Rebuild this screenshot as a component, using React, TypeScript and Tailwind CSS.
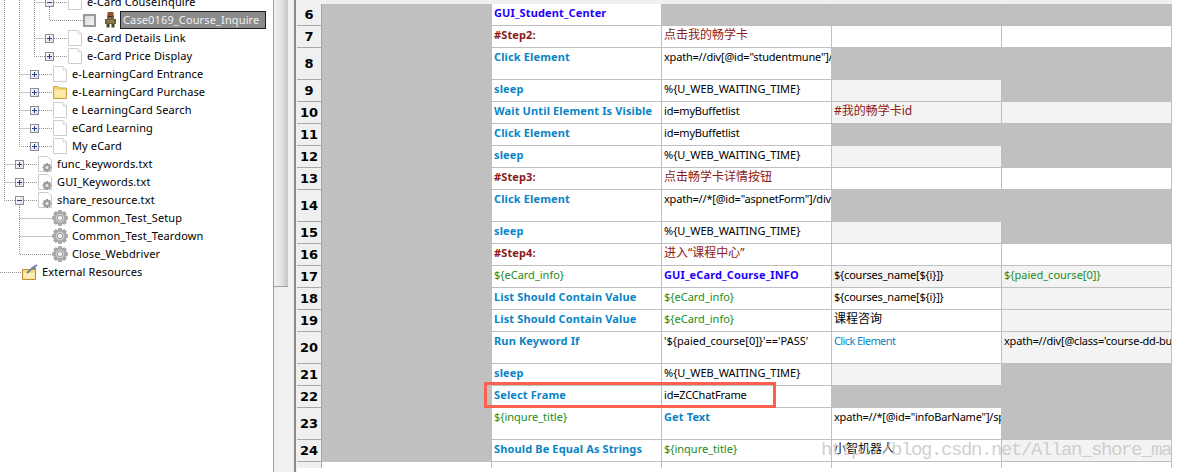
import React from "react";

const FONT = "font-['Noto_Sans','Noto_Sans_CJK_SC',sans-serif]";

function cogPath(cx: number, cy: number, r1: number, r2: number, n: number) {
  const pts: string[] = [];
  for (let i = 0; i < n; i++) {
    const a = (i / n) * Math.PI * 2;
    const w = Math.PI / n;
    const seq: [number, number][] = [
      [a - w * 0.95, r2],
      [a - w * 0.45, r1],
      [a + w * 0.45, r1],
      [a + w * 0.95, r2],
    ];
    seq.forEach(([t, r]) => pts.push(`${(cx + Math.cos(t) * r).toFixed(2)} ${(cy + Math.sin(t) * r).toFixed(2)}`));
  }
  return "M" + pts.join("L") + "Z";
}

function Cog({ size = 16 }: { size?: number }) {
  return (
    <svg width={size} height={size} viewBox="0 0 16 16" className="shrink-0">
      <path d={cogPath(8, 8, 7.8, 5.9, 8)} fill="#a9a9a9" stroke="#8f8f8f" strokeWidth="0.5" />
      <circle cx="8" cy="8" r="4.2" fill="#cfcfcf" />
      <circle cx="8" cy="8" r="2.6" fill="#f4f4f4" stroke="#8c8c8c" strokeWidth="0.8" />
    </svg>
  );
}

function Page() {
  return (
    <svg width="14" height="16" viewBox="0 0 14 16" className="shrink-0">
      <path d="M.5.5H10L13.5 4V15.5H.5Z" fill="#fff" stroke="#cdcdcd" />
      <path d="M10 .5V4H13.5" fill="#f2f2f2" stroke="#d8d8d8" />
    </svg>
  );
}

function Folder() {
  return (
    <svg width="14" height="16" viewBox="0 0 14 16" className="shrink-0">
      <path d="M.5 2.5H5L6 4H13.5V14.5H.5Z" fill="#f4d877" stroke="#c9a54a" />
      <path d="M1.5 6H12.5V13.5H1.5Z" fill="#fbeaa8" />
    </svg>
  );
}

function GearFile() {
  return (
    <svg width="14" height="16" viewBox="0 0 14 16" className="shrink-0">
      <path d="M.5.5H10L13.5 4V15.5H.5Z" fill="#fff" stroke="#cdcdcd" />
      <path d={cogPath(9, 11.5, 4.6, 3.3, 8)} fill="#9a9a9a" />
      <circle cx="9" cy="11.5" r="1.6" fill="#ececec" />
    </svg>
  );
}

function Robot() {
  return (
    <svg width="13" height="16" viewBox="0 0 13 16" className="shrink-0">
      <rect x="3.5" y="0" width="6" height="3" fill="#9c4a2a" />
      <rect x="3" y="3" width="7" height="4" fill="#7d6a3e" />
      <rect x="4" y="4" width="5" height="1" fill="#3c3420" />
      <rect x="1" y="7" width="11" height="5" fill="#6f5f38" />
      <rect x="3" y="8" width="7" height="3" fill="#8a7a4c" />
      <rect x="2.5" y="12" width="3" height="3.5" fill="#4e4428" />
      <rect x="7.5" y="12" width="3" height="3.5" fill="#4e4428" />
    </svg>
  );
}

function ExternalIcon() {
  return (
    <svg width="16" height="16" viewBox="0 0 16 16" className="shrink-0">
      <path d="M.5 5.5H13.5V15.5H.5Z" fill="#f6dc80" stroke="#bd8f3c" />
      <path d="M1.5 9H12.5V14.5H1.5Z" fill="#fbeeb8" />
      <path d="M5 9L11 3.5M11 3.5L15 1M11 3.5L14 5" stroke="#6d7f94" strokeWidth="1.8" fill="none" />
    </svg>
  );
}

function Toggle({ open }: { open?: boolean }) {
  return (
    <span className="relative mr-[14px] block h-[9px] w-[9px] shrink-0 border border-[#8c8c9c] bg-gradient-to-br from-white to-[#dcdce6]">
      <span className="absolute left-[1px] top-[3px] h-[1px] w-[5px] bg-[#2a3f8f]" />
      {!open && <span className="absolute left-[3px] top-[1px] h-[5px] w-[1px] bg-[#2a3f8f]" />}
    </span>
  );
}

const TREE_TEXT = "whitespace-nowrap text-[11px] leading-[16px] tracking-[0.13px]";

function Label({ children }: { children: React.ReactNode }) {
  return <span className={`${TREE_TEXT} pl-[5px] text-black`}>{children}</span>;
}

function TreeRow({ pad, open, icon, text }: { pad: string; open?: boolean; icon: React.ReactNode; text: string }) {
  return (
    <div className={`flex h-[18px] items-center ${pad}`}>
      <Toggle open={open} />
      {icon}
      <Label>{text}</Label>
    </div>
  );
}

function CogRow({ text }: { text: string }) {
  return (
    <div className="flex h-[18px] items-center pl-[52px]">
      <Cog />
      <span className={`${TREE_TEXT} pl-[4px] text-black`}>{text}</span>
    </div>
  );
}

function Tree() {
  const line = { stroke: "#8f8f8f", strokeWidth: 1, strokeDasharray: "1 1", fill: "none" };
  return (
    <div className={`relative h-full w-[273px] shrink-0 overflow-hidden bg-white ${FONT}`}>
      <svg width="273" height="472" className="absolute left-0 top-0">
        <path d="M4.5 0V200.5H15" {...line} />
        <path d="M19.5 0V146.5H30" {...line} />
        <path d="M34.5 0V56.5H45" {...line} />
        <path d="M34.5 2.5H45M34.5 38.5H45" {...line} />
        <path d="M49.5 7V20.5H83" {...line} />
        <path d="M19.5 74.5H30M19.5 92.5H30M19.5 110.5H30M19.5 128.5H30" {...line} />
        <path d="M4.5 164.5H15M4.5 182.5H15" {...line} />
        <path d="M54 2.5H68M54 38.5H68M54 56.5H68" {...line} />
        <path d="M39 74.5H53M39 92.5H53M39 110.5H53M39 128.5H53M39 146.5H53" {...line} />
        <path d="M24 164.5H38M24 182.5H38M24 200.5H38" {...line} />
        <path d="M19.5 205V254.5H52M19.5 218.5H52M19.5 236.5H52" {...line} />
        <path d="M0 272.5H22" {...line} />
      </svg>
      <div className="relative -mt-[7px]">
        <TreeRow pad="pl-[45px]" open icon={<Page />} text="e-Card CouseInquire" />
        <div className="flex h-[18px] items-center pl-[83px]">
          <span className="block h-[13px] w-[13px] shrink-0 border-2 border-[#9a9a9a] bg-gradient-to-br from-[#d8d8d8] to-[#f6f6f6]" />
          <span className="ml-[8px] mr-[3px] flex"><Robot /></span>
          <span className="flex h-[18px] w-[146px] items-center whitespace-nowrap border border-[#1c1c1c] bg-[#8c8c8c] pl-[2px] text-[11px] tracking-[0.13px] text-[#f0f0f0]">
            Case0169_Course_Inquire
          </span>
        </div>
        <TreeRow pad="pl-[45px]" icon={<Page />} text="e-Card Details Link" />
        <TreeRow pad="pl-[45px]" icon={<Page />} text="e-Card Price Display" />
        <TreeRow pad="pl-[30px]" icon={<Page />} text="e-LearningCard Entrance" />
        <TreeRow pad="pl-[30px]" icon={<Folder />} text="e-LearningCard Purchase" />
        <TreeRow pad="pl-[30px]" icon={<Page />} text="e LearningCard Search" />
        <TreeRow pad="pl-[30px]" icon={<Page />} text="eCard Learning" />
        <TreeRow pad="pl-[30px]" icon={<Page />} text="My eCard" />
        <TreeRow pad="pl-[15px]" icon={<GearFile />} text="func_keywords.txt" />
        <TreeRow pad="pl-[15px]" icon={<GearFile />} text="GUI_Keywords.txt" />
        <TreeRow pad="pl-[15px]" open icon={<GearFile />} text="share_resource.txt" />
        <CogRow text="Common_Test_Setup" />
        <CogRow text="Common_Test_Teardown" />
        <CogRow text="Close_Webdriver" />
        <div className="flex h-[18px] items-center pl-[22px]">
          <ExternalIcon />
          <span className={`${TREE_TEXT} pl-[4px] text-black`}>External Resources</span>
        </div>
      </div>
    </div>
  );
}

type Kind = "k" | "kn" | "b" | "m" | "c" | "v" | "p" | "s" | "z";
type Cell = { t?: string; k?: Kind; bg?: "g" | "l" };

const G: Cell = { bg: "g" };
const L: Cell = { bg: "l" };
const W: Cell = {};
const k = (t: string): Cell => ({ t, k: "k" });
const p = (t: string): Cell => ({ t, k: "p" });
const v = (t: string): Cell => ({ t, k: "v" });
const m = (t: string): Cell => ({ t, k: "m" });
const c = (t: string): Cell => ({ t, k: "c" });
const z = (t: string): Cell => ({ t, k: "z" });
const b = (t: string): Cell => ({ t, k: "b" });
const SL: Cell = { t: "%{U_WEB_WAITING_TIME}", k: "s" };
const CN = "${courses_name[${i}]}";

const rows: { n: number; tall?: boolean; cells: Cell[] }[] = [
  { n: 6, cells: [b("GUI_Student_Center"), G, G, G] },
  { n: 7, cells: [m("#Step2:"), c("点击我的畅学卡"), W, W] },
  { n: 8, tall: true, cells: [k("Click Element"), p('xpath=//div[@id="studentmune"]/'), G, G] },
  { n: 9, cells: [k("sleep"), SL, L, G] },
  { n: 10, cells: [k("Wait Until Element Is Visible"), p("id=myBuffetlist"), { t: "#我的畅学卡id", k: "c", bg: "l" }, L] },
  { n: 11, cells: [k("Click Element"), p("id=myBuffetlist"), G, G] },
  { n: 12, cells: [k("sleep"), SL, L, G] },
  { n: 13, cells: [m("#Step3:"), c("点击畅学卡详情按钮"), W, W] },
  { n: 14, tall: true, cells: [k("Click Element"), p('xpath=//*[@id="aspnetForm"]/div'), G, G] },
  { n: 15, cells: [k("sleep"), SL, L, G] },
  { n: 16, cells: [m("#Step4:"), c("进入“课程中心”"), W, W] },
  { n: 17, cells: [v("${eCard_info}"), b("GUI_eCard_Course_INFO"), { t: CN, k: "p", bg: "l" }, { t: "${paied_course[0]}", k: "v", bg: "l" }] },
  { n: 18, cells: [k("List Should Contain Value"), v("${eCard_info}"), p(CN), L] },
  { n: 19, cells: [k("List Should Contain Value"), v("${eCard_info}"), z("课程咨询"), L] },
  { n: 20, tall: true, cells: [k("Run Keyword If"), { t: "'${paied_course[0]}'=='PASS'", k: "s" }, { t: "Click Element", k: "kn" }, { t: "xpath=//div[@class='course-dd-bu", k: "p", bg: "l" }] },
  { n: 21, cells: [k("sleep"), SL, L, G] },
  { n: 22, cells: [k("Select Frame"), p("id=ZCChatFrame"), G, G] },
  { n: 23, tall: true, cells: [v("${inqure_title}"), k("Get Text"), p('xpath=//*[@id="infoBarName"]/sp'), G] },
  { n: 24, cells: [k("Should Be Equal As Strings"), v("${inqure_title}"), z("小智机器人"), L] },
];

const kindClass: Record<Kind, string> = {
  k: "font-bold text-[#0a84c6] text-[11px] tracking-[0.13px]",
  kn: "text-[#0a84c6] text-[11px] tracking-[-0.6px]",
  b: "font-bold text-[#1f00ff] text-[11px] tracking-[0.13px]",
  m: "font-bold text-[#8b1a1a] text-[11px] tracking-[0.13px]",
  c: "text-[#8b1a1a] text-[12px]",
  v: "text-[#228b22] text-[11px]",
  p: "text-black text-[11px] tracking-[-0.2px]",
  s: "text-black text-[11px]",
  z: "text-black text-[12px]",
};

function DataCell({ cell }: { cell: Cell }) {
  const bg = cell.bg === "g" ? "bg-[#c0c0c0]" : cell.bg === "l" ? "bg-[#f3f3f3]" : "bg-white";
  return (
    <div className={`h-full w-[170px] shrink-0 overflow-hidden whitespace-nowrap border-b border-r border-[#bfbfbf] pl-[2px] leading-[18px] ${bg} ${cell.k ? kindClass[cell.k] : ""}`}>
      {cell.t}
    </div>
  );
}

function Sheet() {
  return (
    <div className={`relative h-full flex-1 overflow-hidden bg-white ${FONT}`}>
      <div className="h-1 w-[875px] bg-[#f0f0f0]" />
      {rows.map((r) => (
        <div key={r.n} className={`flex ${r.tall ? "h-[32px]" : "h-[22px]"}`}>
          <div className="flex h-full w-[25px] shrink-0 items-center justify-center border-b border-r border-[#a8a8a8] bg-[#f0f0f0] pt-[1px] font-['DejaVu_Sans',sans-serif] text-[13px] font-bold text-black">
            {r.n}
          </div>
          <div className="h-full w-[170px] shrink-0 bg-[#c0c0c0]" />
          {r.cells.map((cell, i) => (
            <DataCell key={i} cell={cell} />
          ))}
        </div>
      ))}
      <div className="flex h-[6px]">
        <div className="h-full w-[25px] shrink-0 border-r border-[#a8a8a8] bg-[#f0f0f0]" />
        <div className="h-full w-[170px] shrink-0 border-r border-[#bfbfbf] bg-white" />
        <div className="h-full w-[170px] shrink-0 border-r border-[#bfbfbf] bg-white" />
        <div className="h-full w-[170px] shrink-0 border-r border-[#bfbfbf] bg-white" />
        <div className="h-full w-[170px] shrink-0 border-r border-[#bfbfbf] bg-white" />
        <div className="h-full w-[170px] shrink-0 border-r border-[#bfbfbf] bg-white" />
      </div>
      {/* red annotation box */}
      <div className="absolute left-[187px] top-[382px] h-[26px] w-[292px] border-[3px] border-[#fb6050]" />
      {/* watermark */}
      <div className="absolute left-[524px] top-[439px] w-[351px] overflow-hidden whitespace-nowrap font-['Liberation_Mono',monospace] text-[19px] leading-[22px] tracking-[-1.4px] text-[#c4c4c4]/80">
        http://blog.csdn.net/Allan_shore_ma
      </div>
    </div>
  );
}

export default function App() {
  return (
    <div className="flex h-[472px] w-[1183px] overflow-hidden bg-white">
      <Tree />
      <div className="h-full w-[15px] shrink-0 border-l border-[#a0a0a0] bg-[#f0f0f0]">
        <div className="h-[287px] w-full border-b border-[#a0a0a0] bg-gradient-to-r from-[#f2f2f2] via-[#e4e4e4] to-[#c4c4c4]" />
      </div>
      <div className="h-full w-[6px] shrink-0 bg-[#f0f0f0]" />
      <div className="h-full w-[2px] shrink-0 bg-[#8a8a8a]" />
      <div className="h-full w-[1px] shrink-0 bg-[#f0f0f0]" />
      <Sheet />
    </div>
  );
}
